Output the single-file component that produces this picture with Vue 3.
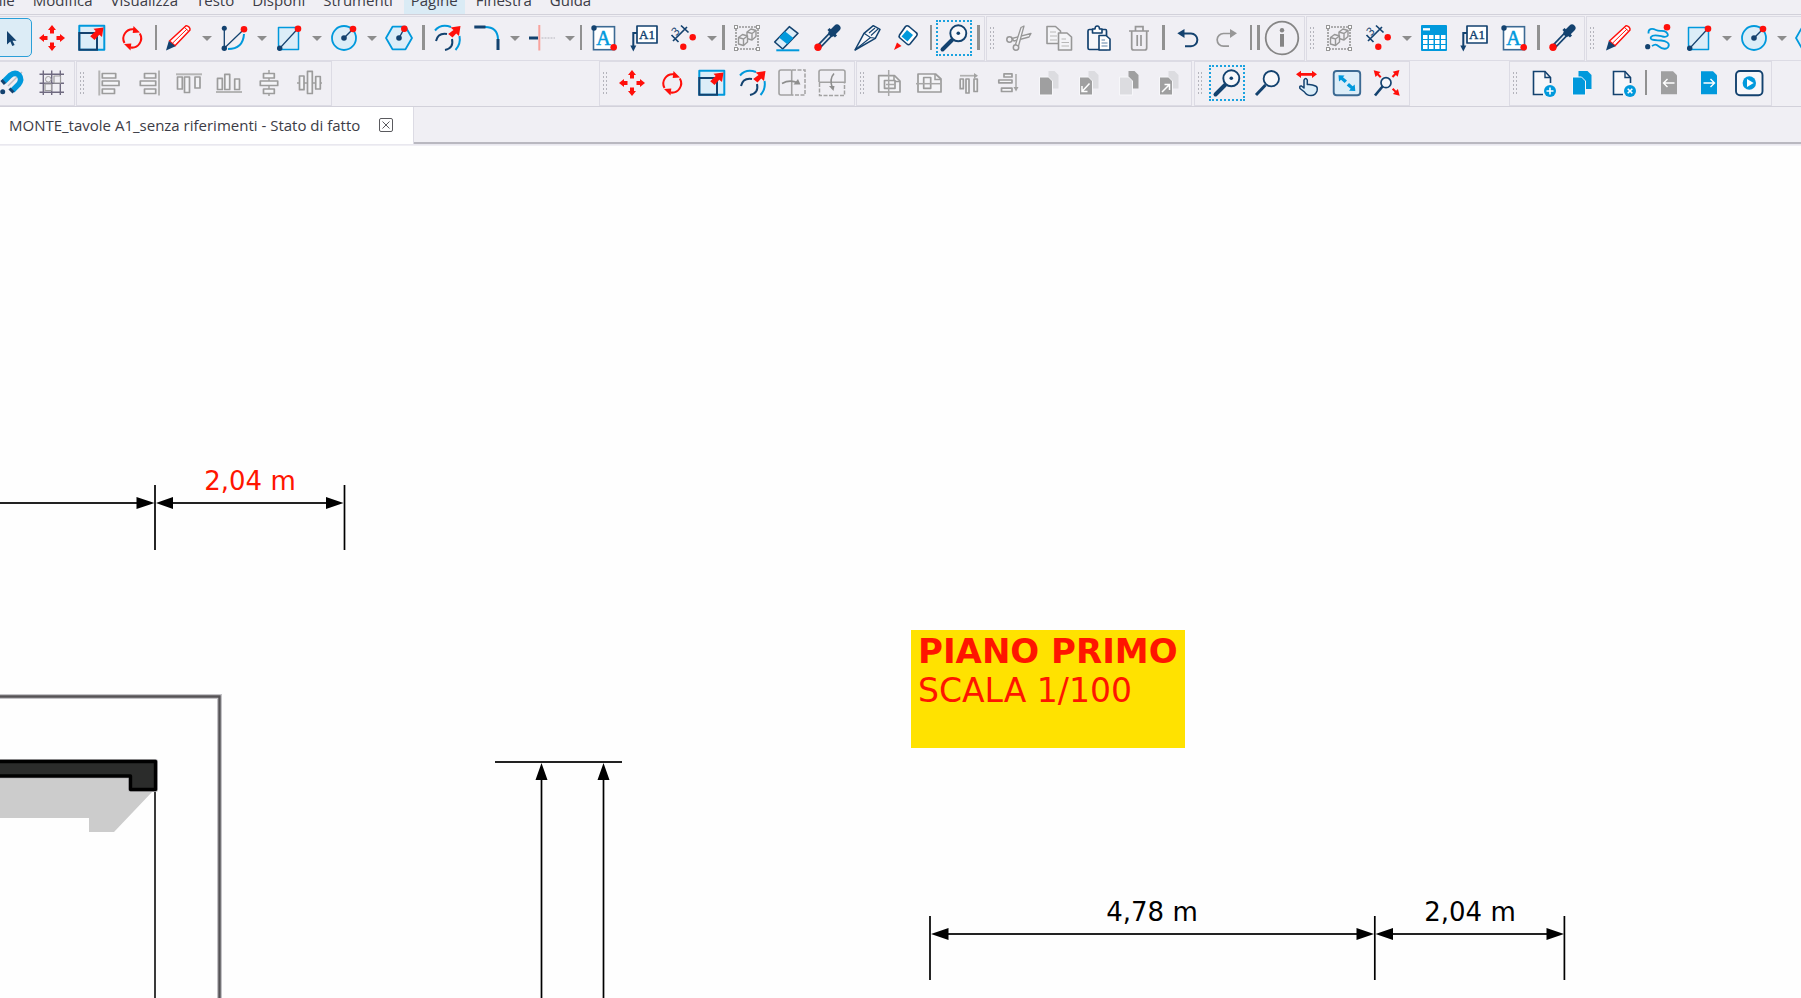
<script setup>
import { ref } from 'vue'

const N = '#13426f'
const B = '#0099dc'
const L = '#dcedf8'
const R = '#ff0f0a'
const G = '#979797'
const W = '#f7f7fa'

const dot = (x, y, r, c) => `<circle cx="${x}" cy="${y}" r="${r}" fill="${c}"/>`
const ring = (x, y, r, c, f, w) => `<circle cx="${x}" cy="${y}" r="${r}" fill="${f}" stroke="${c}" stroke-width="${w}"/>`
const line = (d, c, w = 2, extra = '') => `<path d="${d}" fill="none" stroke="${c}" stroke-width="${w}" ${extra}/>`
const fill = (d, c) => `<path d="${d}" fill="${c}"/>`
const shape = (d, c, f, w = 2) => `<path d="${d}" fill="${f}" stroke="${c}" stroke-width="${w}" stroke-linejoin="round"/>`
const turned = (d, angles, x, y) => angles.map((a) => `<path d="${d}" fill="${R}" transform="rotate(${a} ${x} ${y})"/>`).join('')
const bars = (list) => list.map(([x1, y1, x2, y2]) => shape(`M${x1} ${y1}H${x2}V${y2}H${x1}Z`, '#9c9c9c', '#f4f4f7', 1.7)).join('')
const leaf = (x, y, w, h, c) => fill(`M${x} ${y}h${w - 4}l4 4v${h - 4}h${-w}z`, c)
const frontLeaf = (c) => `<path d="M10.5 14h9l4 4v14h-13z" fill="${c}" stroke="${W}"/>`

const cube = (x, y) =>
  shape(`M${x - 4.5} ${y - 2}l4-3 5 1.5v6l-4 3.5-5-1.5z`, G, '#f0eff4', 1.4) +
  line(`M${x - 4.5} ${y - 2}l5 1.5 4-3M${x + 0.5} ${y - 0.5}v6.5`, G, 1.4)

const corners = [[9, 9], [31, 9], [9, 31], [31, 31]]
  .map(([x, y]) => `<rect x="${x - 1.5}" y="${y - 1.5}" width="3" height="3" fill="#fff" stroke="${G}"/>`).join('')

const newPage =
  fill('M11.5 8.5H23L28.5 14.5V31.5H11.5Z', W) +
  line('M21 31.5H11.5V8.5H23L28.5 14.5V20', N, 1.6) + line('M23 8.5V14.5H28.5', N, 1.4) + dot(28, 28, 6, B)

const layers = (front, back) => leaf(19.5, 8, 10, 17.5, back) + frontLeaf(front)

const icons = {
  cursor: fill('M15 13V26.5L18.3 23.5L20.3 28L22.6 27L20.5 22.7H24.5Z', N),
  move: turned('M20 7L24 12H22V15.5H18V12H16Z', [0, 90, 180, 270], 20, 20),
  resize:
    shape('M7.3 7.7H32.3V31.7H7.3Z', B, L) + line('M7.3 15H25V31.7M7.3 14V31.7H26', N) +
    fill('M31.5 9.5L30 19L27.3 16.8L22.5 22L18.2 18.2L23.7 13L21.5 10.8Z', R),
  rotate:
    line('M22 11.3A9.3 9.3 0 0 0 12.5 25M27.8 15.5A9.3 9.3 0 0 1 18.5 29.5', R) +
    fill('M21.5 8L28 14.5L20.7 15Z', R) + fill('M18.5 32.5L12 26L19.3 25.5Z', R),
  pencil:
    shape('M10.5 23L27 7.7Q28.5 7.5 30 9Q31.3 10.5 31 12L16 27.7Z', R, '#fff', 1.5) +
    line('M13.5 25.2L28 11M25.5 9.5L29.5 13', R, 1) + fill('M7 32.5L9.8 23L16.5 28.3Z', N),
  curve:
    line('M10.3 10.3V30.3L30 11.3', N, 1.3) + line('M30 16Q29 31 14 31', B) + dot(10.3, 10.3, 2.5, N) + dot(10.3, 30.3, 2.7, N) + dot(30, 11.3, 3.3, R),
  rect: shape('M9.5 9.5H29.5V31.5H9.5Z', B, L, 1.5) + line('M11 30L28.5 11', N, 1.2) + dot(10.7, 30.3, 2.7, N) + dot(29, 10.7, 3.3, R),
  circle: ring(20, 20, 12, B, L, 1.8) + line('M20 20L28 12', N, 1.4) + dot(20, 20, 2.8, N) + dot(29, 11, 3.3, R),
  hexagon: shape('M7 20L13.5 8.7H26.5L33 20L26.5 31.3H13.5Z', B, L, 1.8) + line('M20 20L25 11', N, 1.4) + dot(20, 20, 2.8, N) + dot(25.3, 10.7, 3.3, R),
  offset:
    line('M8 12.5Q14 5.5 24 9M32.5 18Q34 26 28.5 32', B) + line('M9 23Q11 14.5 20 16M25 21Q27 30 18 32', N) +
    fill('M33.5 8L32 18L29.2 15.5L25.5 19.5L21.2 16L26.5 12L23.5 9.5Z', R),
  fillet: line('M18 9Q30.5 9 31 21', B) + line('M7.3 9H18.5M31 21V32', N, 3),
  trim: line('M7 20H16', N, 3) + line('M17.3 7V32.5', '#f8a29c') + line('M19.5 20H33', '#c9c9d0', 1.5, 'stroke-dasharray="2 1"'),
  text:
    `<rect x="9.5" y="8.7" width="21" height="23" fill="#fff" stroke="#3c6a93" stroke-width="1.6"/>` + dot(10, 10, 2.7, N) +
    `<text x="19.5" y="26.5" font-size="20" text-anchor="middle" fill="${B}" stroke="${B}" stroke-width="0.5" font-family="Liberation Serif, serif">A</text>` + dot(29.7, 29.3, 3.3, R),
  callout:
    shape('M13 8H33V25H13Z', N, '#fff', 1.7) + line('M13 15H9.3V28', N) + fill('M6.3 27.5H12.3L9.3 33.5Z', N) +
    `<text x="23" y="20.5" font-size="13" text-anchor="middle" fill="${N}" stroke="${N}" stroke-width="0.4" font-family="Liberation Serif, serif">A1</text>`,
  dimension:
    line('M9 23L23 9M17 7.5L24.5 14.5M7.5 17L14.5 24', N, 1.7) +
    `<text x="12" y="17" font-size="11" text-anchor="middle" fill="${N}" font-family="Noto Sans, sans-serif" transform="rotate(-45 12 14)">3</text>` +
    dot(28.7, 19.3, 3.2, R) + dot(19.3, 28.7, 3.2, R),
  group: line('M9 9H31V31H9Z', G, 1.6, 'stroke-dasharray="2 1"') + corners + cube(24.5, 16) + cube(16, 21.5),
  eraser: shape('M7.7 24L22.3 8.7L31 15.3L15.7 31Z', N, L, 1.6) + fill('M12 19.4L17.9 13.3L26.4 20L20.3 26.3Z', B) + line('M9.3 32.3H32.3', B),
  dropper:
    line('M12 28.5L26 14', N, 5) + line('M14 26.5L25.5 14.5', '#e6ecf3', 1.8) +
    line('M25 15L30 10', N, 7, 'stroke-linecap="round"') + line('M21.5 11L29 18.5', N, 3) + dot(11, 29.3, 3.7, R),
  knife:
    shape('M8 32L17 15.3L26.3 7.7L33 11.3L28.3 20.3Z', N, W, 1.5) +
    line('M8 32L23.5 19.5L17 15.3M23.5 19.5L28.3 20.3M22 15L28 10M24 17.5L31 11', N, 1.1),
  glue:
    shape('M18.5 8.5Q20 7 22 8.5L29 14.5Q31 16 29.5 18L23 26Q21.5 27.5 20 26L13 20Q11.5 18.5 12.5 17Z', N, '#fff', 1.6) +
    fill('M20 12L26 17L20.5 23.5L14.5 18.5Z', B) + fill('M7 32L10 24.5L14.5 28Z', R),
  zoom: line('M8.5 31.5L18 22', N, 4, 'stroke-linecap="round"') + ring(24.3, 15.3, 8, N, W, 1.9) + dot(24.3, 15.3, 1.8, N),
  zoomPlain: line('M9 32L18.5 22', N, 3) + ring(24.3, 15.7, 7.7, N, W, 1.8),
  cut:
    ring(10.5, 21.5, 2.7, G, 'none', 1.5) + ring(17, 29.5, 2.7, G, 'none', 1.5) +
    shape('M13 20.5L32 15.5L30 19L15 23Z', G, '#f4f4f7', 1.3) + shape('M16.5 26.5L22 9.5L25 8L19.5 28Z', G, '#f4f4f7', 1.3),
  copy:
    shape('M8 8.5H16.5L21.5 13V25.5H8Z', G, '#f4f4f7', 1.6) + line('M11 14H17M11 18H18M11 22H18', '#b8b8b8', 1.2) +
    shape('M19.5 15H28L32.5 19V32H19.5Z', G, '#f4f4f7', 1.6) + line('M22.5 21H27M22.5 24.5H30M22.5 28H30', '#b8b8b8', 1.2),
  paste:
    shape('M10.5 11.5H26.5Q27.5 11.5 27.5 13V31.5H10.5Q9 31.5 9 30V13Q9 11.5 10.5 11.5Z', N, W, 1.7) +
    shape('M13.5 15V11H16Q16 8 18.2 8Q20.5 8 20.5 11H23V15Z', N, '#fff', 1.6) +
    shape('M20 17.5H27L31 21V32H20Z', N, '#fff', 1.6) + line('M22.5 22H26M22.5 25H28.5M22.5 28H28.5', '#5c82a8', 1.2),
  trash: line('M10 13H30M16.5 13V8.7H24V13M12.7 13V30Q12.7 32 14.7 32H25.7Q27.7 32 27.7 30V13M18.2 17V28M22 17V28', G, 1.7),
  undo: line('M16 15.5H24A6.3 6.3 0 0 1 24 28.2H18', N) + fill('M10.3 15.3L17.5 11V20Z', N),
  redo: line('M24 15.5H16.5A6.3 6.3 0 0 0 16.5 28.2H22', G, 1.7) + fill('M30 15.3L23 11V20Z', G),
  info: ring(20, 20, 16.3, '#858585', 'none', 1.8) + dot(20, 12.3, 2.2, '#858585') + line('M20 16V28.7', '#858585', 4),
  table:
    `<rect x="7" y="7" width="26" height="26" rx="1" fill="${B}"/>` + line('M9 11.3H16', '#fff', 2.3) +
    [0, 1, 2].map((r) => [0, 1, 2, 3].map((c) => `<rect x="${9 + c * 6}" y="${17 + r * 5}" width="4.5" height="4" fill="#fff"/>`).join('')).join(''),
  squiggle:
    line('M9.5 15.5C9 10.5 13 10 17 12S24 11.5 27 14C31 17.5 28 19.5 23.5 18.5S14 16 12 19C10 22.5 17 22 22 22.5S31 25 29.5 28.5S23 31 20 28.5S16 26 13 28', B, 1.8) +
    dot(8.7, 28.7, 2.6, N) + dot(28, 9.3, 3.3, R),
  magnet:
    line('M16 23L30 9', '#bdbdc4', 1.5) + line('M12 18.5L18 12.5Q23 8.5 27 12Q30.5 16.5 26.5 21.5L20.5 27.5', B, 5.5) +
    line('M9.5 17L13 21M17.5 25.5L21.5 29.5', N, 3) + dot(10.7, 28.7, 2.5, N),
  snapGrid:
    line('M11.3 7.5V32M19.7 7.5V32M28.3 7.5V32M7.5 11.3H32M7.5 20.3H32M7.5 29.3H32', '#6f6a80', 1.4) +
    ring(16.3, 16.3, 2.8, '#9c9c9c', '#f0eff4', 1) + shape('M22 13H28.5V20H22Z', '#9c9c9c', '#f0eff4', 1.2) + shape('M13 21H19.5V27.5H13Z', '#9c9c9c', '#f0eff4', 1.2),
  alignLeft: line('M10.3 7.5V32.5', '#b5b5b5') + bars([[13.3, 10.5, 26.7, 15], [13.3, 18, 30, 22.5], [13.3, 26, 25.5, 30.5]]),
  alignRight: line('M30 7.5V32.5', '#b5b5b5') + bars([[15.5, 10.5, 26.7, 15], [11.3, 18, 26.7, 22.5], [15.5, 26, 26.7, 30.5]]),
  alignTop: line('M7 11.3H33', '#b5b5b5') + bars([[8.5, 14, 13.3, 26], [15.5, 14, 20.5, 29.5], [26, 14, 31, 25]]),
  alignBottom: line('M7 29H33', '#b5b5b5') + bars([[8.5, 15.3, 13.3, 26.5], [15.8, 11.3, 20.7, 26.5], [25.7, 16, 30.5, 26.5]]),
  centerH: line('M20 7V33', '#b5b5b5') + bars([[14.5, 10.5, 25.3, 15], [11.3, 18, 28.7, 22.5], [14.5, 26, 25.3, 30.5]]),
  centerV: line('M8 20H33', '#b5b5b5') + bars([[10.5, 13, 15, 26.7], [18.5, 8.3, 23.3, 30.5], [26.7, 13.5, 31.3, 26]]),
  mirrorH:
    line('M19.7 7H9Q7 7 7 9V30Q7 32 9 32H19.7V7', '#a2a2a2', 1.6) + line('M20 7H33V32H20', '#a2a2a2', 1.5, 'stroke-dasharray="4 1.5"') +
    line('M10 20.5Q18 16 26 20', '#8e8e8e', 1.6) + fill('M28.5 21.5H21.5L26 16Z', '#8e8e8e'),
  mirrorV:
    line('M7 19.3V9Q7 7 9 7H31Q33 7 33 9V19.3H7', '#a2a2a2', 1.6) + line('M7.5 20V32.5H32.5V20', '#a2a2a2', 1.5, 'stroke-dasharray="4 1.5"') +
    line('M22 10.5Q17 16 20.5 25', '#8e8e8e', 1.6) + fill('M21.5 28L17 23H22.5Z', '#8e8e8e'),
  pageCenterH:
    shape('M9.7 12.7H25.5L31 18V29H9.7Z', '#9c9c9c', '#f4f4f7', 1.7) + line('M25 13V18.5H31', '#9c9c9c', 1.5) + bars([[15.5, 17.5, 26, 25.3]]) + line('M19.7 7V33M17 21.5H26', '#a8a8a8', 1.5),
  pageCenterV:
    shape('M9 11H26.5L32 16V29H9Z', '#9c9c9c', '#f4f4f7', 1.7) + line('M26 11V16.5H32', '#9c9c9c', 1.5) + bars([[14.7, 14.5, 21.7, 25.3]]) + line('M7 20.7H33', '#a8a8a8', 1.5),
  spreadH: line('M11 12.7H26', '#b0b0b0', 1.7) + fill('M25 10L29 12.7L25 15.5Z', '#a2a2a2') + bars([[11.2, 16, 14.3, 25.7], [17, 16, 20, 30], [25, 16, 28.3, 28.5]]),
  spreadV: line('M27 11V26', '#b0b0b0', 1.7) + fill('M24.5 24H29.5L27 28.5Z', '#a2a2a2') + bars([[15, 10.8, 23, 14], [9.8, 17, 23, 19.8], [12.5, 25.2, 23, 28.5]]),
  toFront: layers('#9f9fa0', '#dcdce0'),
  forward: layers('#9f9fa0', '#dcdce0') + line('M20.5 20.5L13 28.5M13 23V28.5H18.5', '#fff', 1.5),
  toBack: layers('#dcdce0', '#9f9fa0'),
  backward: layers('#9f9fa0', '#dcdce0') + line('M13 29L20.5 21.5M15.5 21.5H20.5V27', '#fff', 1.5),
  pan:
    fill('M9 11.3L14 7.7V10H25V7.7L30 11.3L25 15V12.7H14V15Z', R) +
    shape('M17 17Q18.7 14 20.3 17V21.5Q25 21 28.5 23Q31 24 30 28Q28.5 32.5 24 32.5Q19.5 32.5 17.5 29L13 25.5Q12 22.5 14.5 23L17 25Z', N, L, 1.5),
  fit:
    `<rect x="6.7" y="8" width="26.5" height="24.3" rx="3" fill="${L}" stroke="#3c6a93" stroke-width="1.9"/>` +
    fill('M11.5 12.3L17.5 12.5L16 14.3L20 17.5L17.7 20L14 16.7L12 18.5Z', B) + fill('M28.3 28L22 27.7L23.7 25.7L19.7 22.5L22 20L25.7 23.3L27.7 21.5Z', B),
  extents:
    line('M8 32.5L15.5 23.5', N, 2.7) + ring(19, 19.7, 5, N, W, 1.7) +
    turned('M6.7 7.3L13.5 9L11.7 10.8L14.5 13.5L13 15L10.3 12.3L8.5 14Z', [0, 90, 180], 19.7, 20),
  pageAdd: newPage + line('M28 24.5V31.5M24.5 28H31.5', '#fff', 1.6),
  pageRemove: newPage + line('M25.7 25.7L30.3 30.3M30.3 25.7L25.7 30.3', '#fff', 1.6),
  pageCopy: leaf(16.5, 8, 13, 18, B) + frontLeaf(B),
  pagePrev: leaf(12, 8.3, 16, 23, '#9f9fa0') + line('M25.5 20H14.5M18.5 16L14.5 20L18.5 24', '#fff', 1.4),
  pageNext: leaf(12, 8.3, 16, 23, B) + line('M14.5 20H25.5M21.5 16L25.5 20L21.5 24', '#fff', 1.4),
  present: `<rect x="7" y="8" width="26.5" height="24.3" rx="4" fill="${W}" stroke="${N}" stroke-width="1.9"/>` + dot(20.3, 20, 6.7, B) + fill('M18 16L24.7 20L18 24Z', '#fff'),
}

const menus = ['File', 'Modifica', 'Visualizza', 'Testo', 'Disponi', 'Strumenti', 'Pagine', 'Finestra', 'Guida']

// '|' thin separator, '‖' thick separator, 'v' drop-down arrow
const rows = [
  [
    { first: true, items: ['cursor', 'move', 'resize', 'rotate', '|', 'pencil', 'v', 'curve', 'v', 'rect', 'v', 'circle', 'v', 'hexagon', '‖', 'offset', 'fillet', 'v', 'trim', 'v', '|', 'text', 'callout', 'dimension', 'v', '‖', 'group', 'eraser', 'dropper', 'knife', 'glue', '|', 'zoom', '‖'] },
    { items: ['cut', 'copy', 'paste', 'trash', '‖', 'undo', 'redo', '|', '‖', 'info'] },
    { items: ['group', 'dimension', 'v', 'table', 'callout', 'text', '‖', 'dropper'] },
    { items: ['pencil', 'squiggle', 'rect', 'v', 'circle', 'v', 'hexagon', 'v'] },
  ],
  [
    { first: true, items: ['magnet', 'snapGrid'] },
    { items: ['alignLeft', 'alignRight', 'alignTop', 'alignBottom', 'centerH', 'centerV'] },
    { place: 'edit', items: ['move', 'rotate', 'resize', 'offset', 'mirrorH', 'mirrorV'] },
    { items: ['pageCenterH', 'pageCenterV', 'spreadH', 'spreadV', 'toFront', 'forward', 'toBack', 'backward'] },
    { place: 'view', items: ['zoom', 'zoomPlain', 'pan', 'fit', 'extents'] },
    { place: 'pages', items: ['pageAdd', 'pageCopy', 'pageRemove', '|', 'pagePrev', 'pageNext', 'present'] },
  ],
]

const tool = ref('cursor')
</script>

<template>
  <div class="app">
    <nav class="menu" aria-label="Menu">
      <button v-for="m in menus" :key="m" type="button" :class="{ hot: m === 'Pagine' }">{{ m }}</button>
    </nav>

    <div v-for="(row, r) in rows" :key="r" class="row">
      <div v-for="(bar, b) in row" :key="b" class="bar" :class="[bar.place, { first: bar.first }]" role="toolbar">
        <span v-if="!bar.first" class="grip"></span>
        <template v-for="(it, i) in bar.items" :key="i">
          <span v-if="it === '|' || it === '‖'" class="sep" :class="{ thick: it === '‖' }"></span>
          <button v-else-if="it === 'v'" class="caret" type="button" aria-label="options"></button>
          <button v-else class="tool" :class="{ on: it === tool, framed: it === 'zoom' }" type="button" :aria-label="it" @click="tool = it">
            <svg viewBox="0 0 40 40" width="40" height="40" aria-hidden="true" v-html="icons[it]"></svg>
          </button>
        </template>
      </div>
    </div>

    <div class="tabs">
      <div class="tab">
        <button type="button" class="title">MONTE_tavole A1_senza riferimenti - Stato di fatto</button>
        <button type="button" class="close" aria-label="close">
          <svg viewBox="0 0 14 14" width="14" height="14" aria-hidden="true">
            <rect x="0.5" y="0.5" width="13" height="13" rx="1.5" fill="none" stroke="#5a5a5e" />
            <path d="M3.5 3.5L10.5 10.5M10.5 3.5L3.5 10.5" stroke="#5a5a5e" />
          </svg>
        </button>
      </div>
      <div class="rest"></div>
    </div>

    <main class="canvas">
      <svg class="plan" width="100%" height="100%" aria-label="Stato di fatto">
        <path d="M-5 550.5H219.5V900" fill="none" stroke="#c4c3c7" stroke-width="5" />
        <path d="M-5 550.5H219.5V900" fill="none" stroke="#555356" stroke-width="2.4" />
        <path d="M-5 630H130V645H153L114 686H89V672H-5Z" fill="#ccc" />
        <path d="M155 640V900" stroke="#3a3a3a" stroke-width="2" />
        <path d="M-5 615.5H155.5V643.5H130.5V630H-5Z" fill="none" stroke="#b4b3b6" stroke-width="5" stroke-linejoin="round" />
        <path d="M-5 615.5H155.5V643.5H130.5V630H-5Z" fill="#2b2c2b" stroke="#000" stroke-width="3.4" stroke-linejoin="round" />

        <g stroke="#222" stroke-width="2" fill="none">
          <path d="M0 357H150M160 357H340" />
          <path d="M155 339V404M344.5 339V404" stroke="#000" stroke-width="1.7" />
          <path d="M495 616H622" />
          <path d="M541.5 625V900M603.5 625V900" stroke="#000" stroke-width="1.7" />
          <path d="M935 788H1370M1380 788H1560" />
          <path d="M930 770V834M1374.8 770V834M1564.4 770V834" stroke="#000" stroke-width="1.7" />
        </g>
        <path d="M154.5 357l-18-6v12zM156 357l17-6v12zM343.5 357l-17.5-6v12zM541.5 617l-6 17h12zM603.5 617l-6 17h12zM931 788l17.5-6v12zM1374 788l-17.5-6v12zM1375.5 788l17.5-6v12zM1564 788l-17.5-6v12z" />
        <text class="dim red" x="250" y="344">2,04 m</text>
        <text class="dim" x="1152" y="775">4,78 m</text>
        <text class="dim" x="1470" y="775">2,04 m</text>
      </svg>
      <div class="note"><strong>PIANO PRIMO</strong><span>SCALA 1/100</span></div>
    </main>
  </div>
</template>

<style>
body {
  margin: 0;
  overflow: hidden;
}
</style>

<style scoped>
.app {
  height: 100vh;
  display: flex;
  flex-direction: column;
  background: #f0eff4;
  font-family: 'Open Sans', 'Noto Sans', sans-serif;
  font-size: 15px;
  color: #3c3c46;
  overflow: hidden;
}
button {
  border: 0;
  padding: 0;
  background: none;
  font: inherit;
  color: inherit;
  flex: none;
}
.menu {
  display: flex;
  align-items: flex-end;
  gap: 4px;
  height: 14px;
  margin-left: -16px;
  margin-bottom: 1px;
  border-bottom: 1px solid #d2d1da;
}
.menu button {
  height: 25px;
  padding: 0 7px 4px;
  line-height: 20px;
}
.menu .hot {
  background: #daebf5;
}
.row {
  display: flex;
  height: 45px;
  flex: none;
  overflow: hidden;
}
.bar {
  display: flex;
  flex: none;
  box-sizing: border-box;
  margin-left: 1px;
  padding: 1px 2px 0 0;
  border: 1px solid #dcdbe4;
}
.bar.first {
  margin-left: -8px;
  border-left: 0;
}
.bar.edit {
  margin-left: 267px;
}
.bar.view {
  margin-left: 2px;
}
.bar.pages {
  margin-left: 99px;
}
.grip {
  width: 6px;
  height: 24px;
  margin: 8px 4px 0 2px;
  background: radial-gradient(circle, #b4b4bc 1px, transparent 1px) 0 0 / 3px 4px;
}
.tool {
  position: relative;
  width: 40px;
  height: 40px;
}
.tool svg {
  display: block;
}
.tool.on {
  height: 39px;
  box-sizing: border-box;
  border: 1px solid #2a9fd8;
  border-radius: 5px;
  background: #dcecf6;
}
.tool.on svg {
  margin: -1px;
}
.tool.framed::before {
  content: '';
  position: absolute;
  inset: 2px;
  border: 2px dotted #1aa2df;
}
.sep {
  width: 2px;
  height: 25px;
  margin: 7px 2px 0 3px;
  background: #919191;
}
.sep.thick {
  width: 3px;
}
.caret {
  width: 15px;
  height: 40px;
}
.caret::before {
  content: '';
  display: block;
  width: 0;
  margin: 0 auto;
  border: solid transparent;
  border-width: 5px 5px 0;
  border-top-color: #8d8d8d;
}
.tabs {
  display: flex;
  flex: none;
  height: 37px;
  border-top: 1px solid #d2d1da;
  border-bottom: 1px solid #e9e8ef;
}
.tab {
  display: flex;
  align-items: center;
  flex: none;
  gap: 19px;
  padding: 0 20px 2px 9px;
  background: #fff;
  border-right: 1px solid #dcdbe4;
}
.close {
  width: 14px;
  height: 14px;
}
.close svg {
  display: block;
}
.rest {
  flex: 1;
  border-bottom: 2px solid #b9b8c0;
}
.canvas {
  position: relative;
  flex: 1;
  min-height: 0;
  margin-top: 1px;
  background: #fefefe;
  overflow: hidden;
}
.plan {
  position: absolute;
  inset: 0;
}
.dim {
  font: 26px Verdana, 'DejaVu Sans', sans-serif;
  text-anchor: middle;
}
.red {
  fill: #ff1500;
}
.note {
  position: absolute;
  left: 911px;
  top: 484px;
  box-sizing: border-box;
  width: 274px;
  height: 118px;
  padding: 2px 7px;
  background: #ffe200;
  color: #ff1500;
  font: 33px/39px Verdana, 'DejaVu Sans', sans-serif;
  white-space: nowrap;
}
.note strong,
.note span {
  display: block;
}
.note strong {
  font-size: 34px;
}
</style>
